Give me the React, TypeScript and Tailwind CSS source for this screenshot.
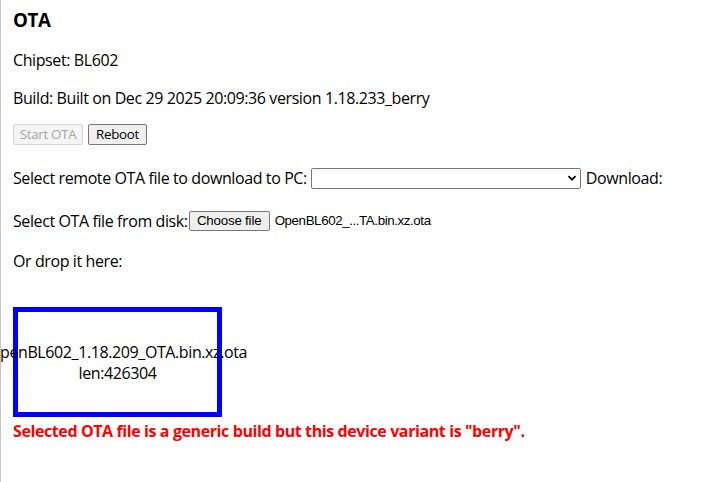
const sans = "font-['Open_Sans',sans-serif] tracking-[-0.4px]";
const ctrl = "font-['Liberation_Sans',Arial,sans-serif] text-[13.33px]";

export default function App() {
  return (
    <div className={`min-h-screen border-l border-[#c8c8c8] bg-white pl-3 pt-2 text-[16px] text-black ${sans}`}>
      <div className="h-6 text-[18.72px] font-bold leading-6">OTA</div>

      <div className="mt-4 h-6 leading-6">Chipset: BL602</div>

      <div className="mt-[14px] h-6 leading-6">Build: Built on Dec 29 2025 20:09:36 version 1.18.233_berry</div>

      <div className="mt-[14px] flex h-[21px] gap-[5px] text-[13.33px] tracking-[-0.3px]">
        <button
          type="button"
          disabled
          className="w-[70px] rounded-[2px] border border-[#d6d6d6] bg-[#f5f5f5] leading-[19px] text-[#a6a6a6]"
        >
          Start OTA
        </button>
        <button
          type="button"
          className="w-[59px] rounded-[2px] border border-[#767676] bg-[#efefef] leading-[19px] text-black"
        >
          Reboot
        </button>
      </div>

      <div className="mt-[21px] flex h-6 items-center whitespace-nowrap">
        <span>Select remote OTA file to download to PC:</span>
        <div className="ml-[4px] flex h-[21px] w-[270px] items-center justify-end rounded-[2px] border border-[#767676] bg-white pr-[3px]">
          <svg width="10" height="10" viewBox="0 0 10 10" fill="none">
            <path d="M1.5 3.2 5 6.7 8.5 3.2" stroke="#000" strokeWidth="1.8" />
          </svg>
        </div>
        <span className="ml-[5px]">Download:</span>
      </div>

      <div className="mt-[19px] flex h-6 items-center whitespace-nowrap">
        <span>Select OTA file from disk:</span>
        <button
          type="button"
          className={`ml-[1px] h-[20px] w-[81px] rounded-[2px] border border-[#767676] bg-[#efefef] leading-[18px] tracking-[-0.2px] ${ctrl}`}
        >
          Choose file
        </button>
        <span className={`ml-[5px] tracking-[-0.4px] ${ctrl}`}>OpenBL602_...TA.bin.xz.ota</span>
      </div>

      <div className="mt-4 h-6 leading-6">Or drop it here:</div>

      <div className="mt-[34px] flex h-[110px] w-[209px] flex-col items-center border-[5px] border-[#0000ff] pt-[30px] leading-[21px] whitespace-nowrap">
        <span>OpenBL602_1.18.209_OTA.bin.xz.ota</span>
        <span>len:426304</span>
      </div>

      <div className="mt-[2px] h-6 font-bold leading-6 text-[#ff0000]">
        Selected OTA file is a generic build but this device variant is "berry".
      </div>
    </div>
  );
}
